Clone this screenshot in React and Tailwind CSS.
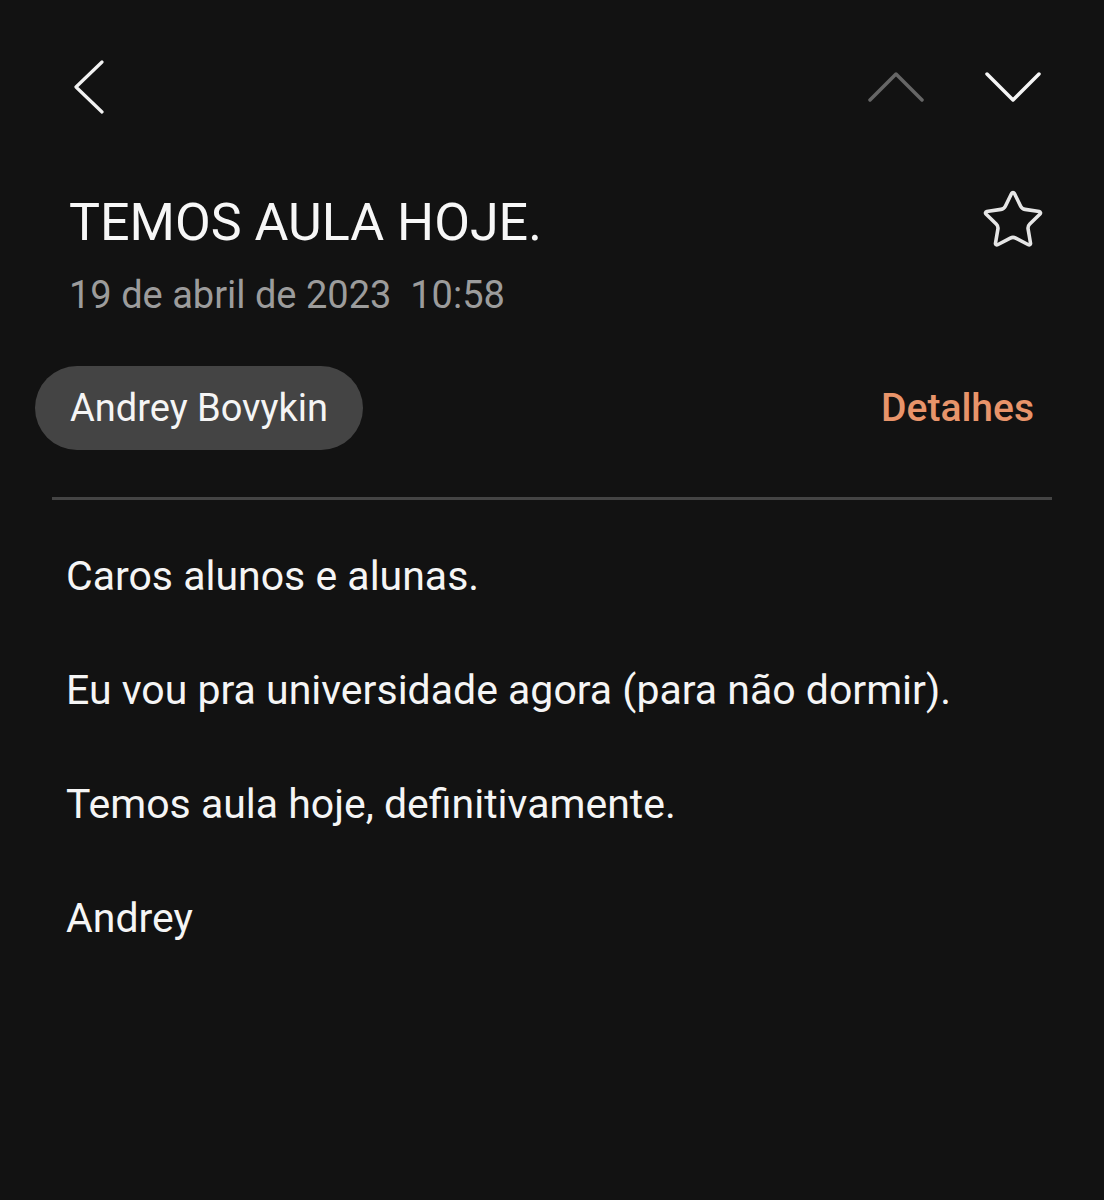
const Chevron = ({ d, w, h, color, sw = 3.5 }) => (
  <svg width={w} height={h} viewBox={`0 0 ${w} ${h}`} fill="none">
    <path d={d} stroke={color} strokeWidth={sw} strokeLinecap="round" strokeLinejoin="round" />
  </svg>
);

const Star = () => (
  <svg width="66" height="66" viewBox="0 0 24 24" fill="none" stroke="#e6e6e6" strokeWidth="1.3" strokeLinejoin="round">
    <path d="M11.525 2.295a.53.53 0 0 1 .95 0l2.31 4.679a2.123 2.123 0 0 0 1.595 1.16l5.166.756a.53.53 0 0 1 .294.904l-3.736 3.638a2.123 2.123 0 0 0-.611 1.878l.882 5.14a.53.53 0 0 1-.771.56l-4.618-2.428a2.122 2.122 0 0 0-1.973 0L6.396 21.01a.53.53 0 0 1-.77-.56l.881-5.139a2.122 2.122 0 0 0-.611-1.879L2.16 9.795a.53.53 0 0 1 .294-.906l5.165-.755a2.122 2.122 0 0 0 1.597-1.16z" />
  </svg>
);

const paragraphs = [
  "Caros alunos e alunas.",
  "Eu vou pra universidade agora (para não dormir).",
  "Temos aula hoje, definitivamente.",
  "Andrey",
];

export default function App() {
  return (
    <div className="min-h-[1200px] w-full bg-[#121212] text-white font-['Roboto','Liberation_Sans',sans-serif]">
      {/* barra de cima */}
      <div className="flex justify-between items-start pt-[60px] pl-[73px] pr-[62px]">
        <Chevron w={32} h={54} d="M29 2 L3 27 L29 52" color="#f2f2f2" sw={3.2} />
        <div className="flex gap-[60px] mt-[12px]">
          <Chevron w={56} h={30} d="M2 28 L28 2 L54 28" color="#666666" />
          <Chevron w={58} h={30} d="M3 2 L29 28 L55 2" color="#f5f5f5" />
        </div>
      </div>

      {/* assunto */}
      <div className="flex justify-between items-start mt-[83px] pl-[69px] pr-[58px]">
        <div>
          <h1 className="text-[52px] leading-[52px] text-[#f7f7f7]">TEMOS AULA HOJE.</h1>
          <div className="mt-[27px] text-[38px] leading-[38px] text-[#9c9c9c] whitespace-pre">
            19 de abril de 2023  10:58
          </div>
        </div>
        <div className="-mt-[10px]">
          <Star />
        </div>
      </div>

      {/* remetente */}
      <div className="flex justify-between items-center mt-[52px] pl-[35px] pr-[70px]">
        <div className="h-[84px] px-[35px] rounded-full bg-[#444444] flex items-center text-[38px] text-[#f5f5f5]">
          Andrey Bovykin
        </div>
        <button className="text-[39px] font-medium text-[#e8946a]">Detalhes</button>
      </div>

      <div className="mt-[47px] ml-[52px] w-[1000px] h-[3px] bg-[#444444]" />

      {/* corpo */}
      <div className="mt-[19px] pl-[66px] text-[41px] leading-[114px] text-[#f5f5f5]">
        {paragraphs.map((p) => (
          <p key={p}>{p}</p>
        ))}
      </div>
    </div>
  );
}
